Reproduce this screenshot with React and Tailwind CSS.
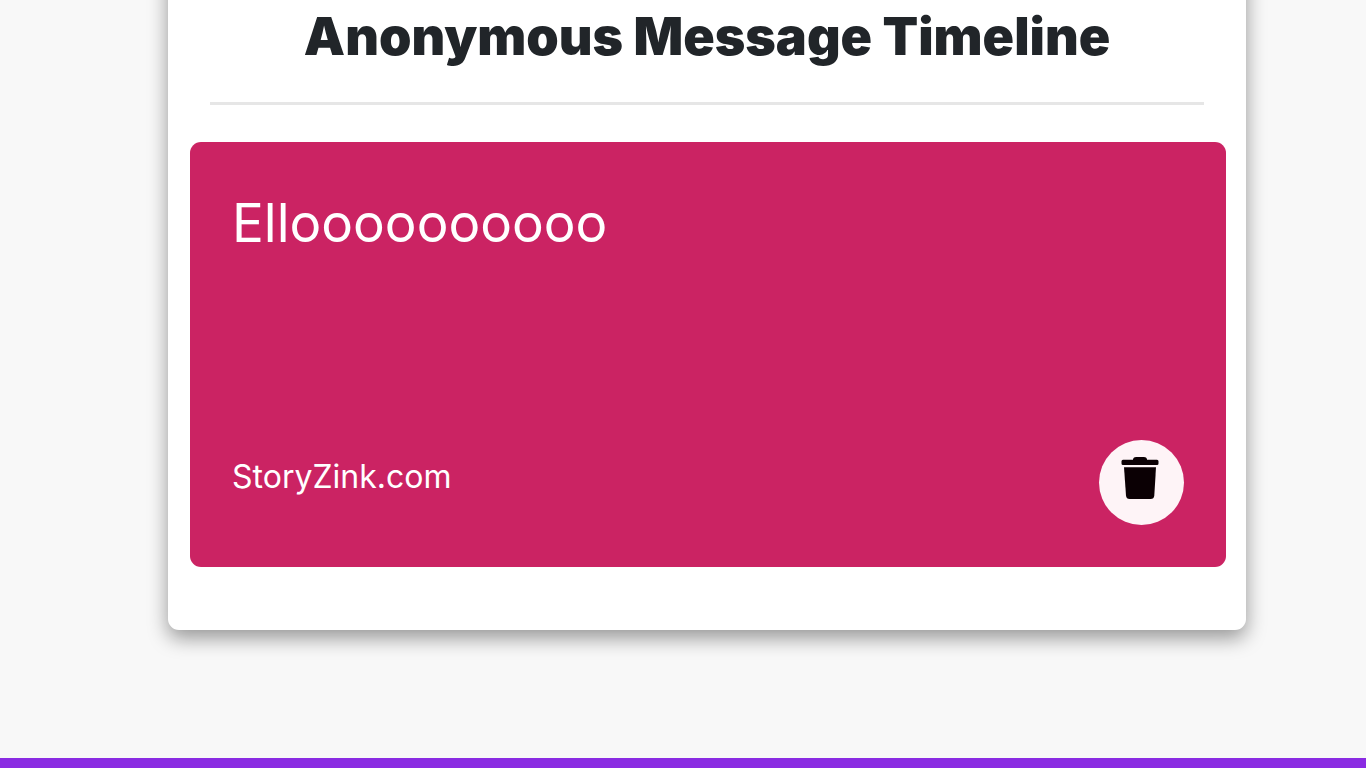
function TrashIcon() {
  return (
    <svg viewBox="0 0 38 42" className="h-[42px] w-[38px]" fill="#0b0004" aria-hidden="true">
      <path d="M2 2.700H12V2Q12.500 0 15 0H23Q25.500 0 26 2V2.700H36Q37.500 2.700 37.500 4.200V6.500Q37.500 8 36 8H2Q.5 8 .5 6.500V4.200Q.5 2.700 2 2.700Z" />
      <path d="M3 10.200H35L33.300 38.500Q33 42 29.500 42H8.700Q5.300 42 5 38.500Z" />
    </svg>
  );
}

function MessageCard({ message, source }) {
  return (
    <article className="ml-[22px] mr-5 flex min-h-[425px] flex-col justify-between rounded-[11px] bg-[#cb2363] p-[42px] text-white">
      <p className="text-[53px] leading-[78px] font-normal">{message}</p>
      <div className="flex items-end justify-between">
        <p className="pb-[23px] text-[32px] leading-[50px] font-normal">{source}</p>
        <button
          type="button"
          aria-label="Delete message"
          className="flex size-[85px] items-start justify-center rounded-full bg-[#fef4f7] pt-[17px] pr-1"
        >
          <TrashIcon />
        </button>
      </div>
    </article>
  );
}

export default function App() {
  return (
    <div className="flex min-h-screen flex-col overflow-hidden bg-[#f8f8f8] font-['Inter','Liberation_Sans',sans-serif]">
      <main className="-mt-10 mr-[120px] ml-[168px] rounded-[11px] bg-white pt-10 pb-[63px] shadow-[0_8px_20px_rgba(0,0,0,0.4)]">
        <h1 className="pt-[5px] text-center text-[52px] leading-[64px] font-black text-[#212529]">
          Anonymous Message Timeline
        </h1>
        <hr className="mx-[42px] mt-[33px] mb-[37px] border-t-[3px] border-[#e6e6e6]" />
        <MessageCard message="Elloooooooooo" source="StoryZink.com" />
      </main>
      <footer className="mt-auto h-[10px] bg-[#8a2be2]" />
    </div>
  );
}
